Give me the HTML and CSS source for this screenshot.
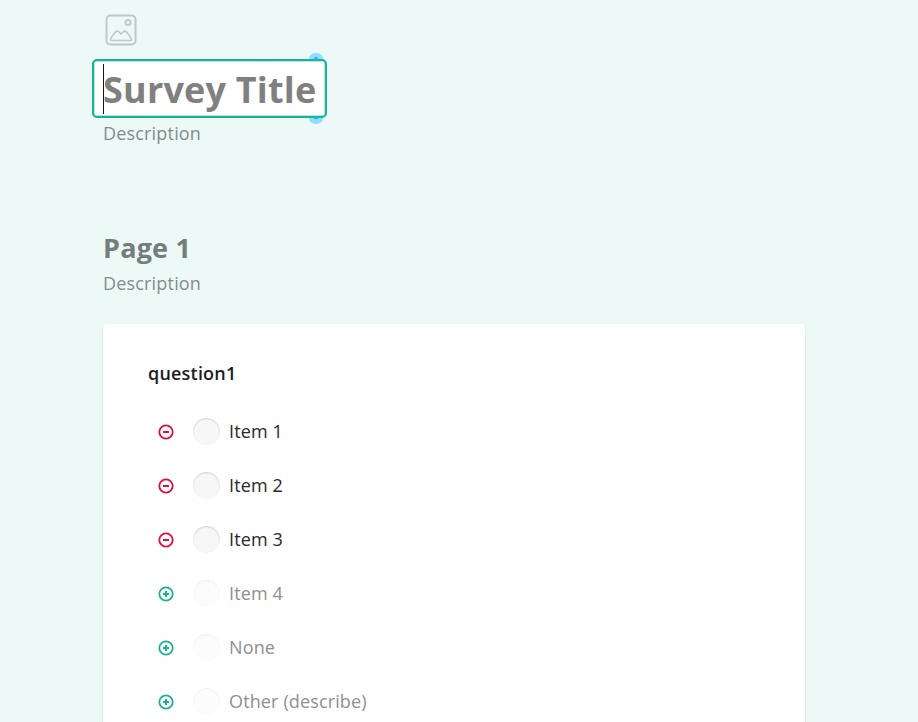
FILE: index.html
```html
<!DOCTYPE html>
<html lang="en">
<head>
<meta charset="utf-8">
<title>Survey</title>
<link rel="stylesheet" href="styles.css">
</head>
<body>
<main class="survey">
  <div class="logo">
    <svg width="32" height="32" viewBox="0 0 32 32" fill="none" stroke="#bfc9c6" stroke-width="2">
      <rect x="1.500" y="1.500" width="29" height="29" rx="4"/>
      <circle cx="23" cy="8.500" r="2.600"/>
      <path d="M5.500 25.500c0-1 .5-2 1.500-3l3.500-4.500c1-1 2.500-1 3.500 0l2 2 2-2c1-1 2.500-1 3.500 0l3.500 4.500c1 1 1.500 2 1.500 3 0 .5-.5 1-1 1H6.500c-.5 0-1-.5-1-1z" stroke-width="1.600"/>
    </svg>
  </div>
  <header class="head">
    <div class="title-box">
      <span class="caret"></span>
      <h1 class="title">Survey Title</h1>
      <span class="handle handle-top"></span>
      <span class="handle handle-bottom"></span>
    </div>
    <p class="desc">Description</p>
  </header>
  <section class="page">
    <h2 class="page-title">Page 1</h2>
    <p class="desc">Description</p>
    <div class="card">
      <h3 class="question">question1</h3>
      <ul class="items">
        <li class="item">
          <svg class="act" width="16" height="16" viewBox="0 0 16 16" fill="none" stroke="#e50a3e" stroke-width="1.800"><circle cx="8" cy="8" r="6.700"/><path d="M5 8h6" stroke-width="2"/></svg>
          <span class="radio"></span><span class="label">Item 1</span>
        </li>
        <li class="item">
          <svg class="act" width="16" height="16" viewBox="0 0 16 16" fill="none" stroke="#e50a3e" stroke-width="1.800"><circle cx="8" cy="8" r="6.700"/><path d="M5 8h6" stroke-width="2"/></svg>
          <span class="radio"></span><span class="label">Item 2</span>
        </li>
        <li class="item">
          <svg class="act" width="16" height="16" viewBox="0 0 16 16" fill="none" stroke="#e50a3e" stroke-width="1.800"><circle cx="8" cy="8" r="6.700"/><path d="M5 8h6" stroke-width="2"/></svg>
          <span class="radio"></span><span class="label">Item 3</span>
        </li>
        <li class="item off">
          <svg class="act" width="16" height="16" viewBox="0 0 16 16" fill="none" stroke="#19b394" stroke-width="1.800"><circle cx="8" cy="8" r="6.700"/><path d="M5 8h6M8 5v6" stroke-width="2"/></svg>
          <span class="radio"></span><span class="label">Item 4</span>
        </li>
        <li class="item off">
          <svg class="act" width="16" height="16" viewBox="0 0 16 16" fill="none" stroke="#19b394" stroke-width="1.800"><circle cx="8" cy="8" r="6.700"/><path d="M5 8h6M8 5v6" stroke-width="2"/></svg>
          <span class="radio"></span><span class="label">None</span>
        </li>
        <li class="item off">
          <svg class="act" width="16" height="16" viewBox="0 0 16 16" fill="none" stroke="#19b394" stroke-width="1.800"><circle cx="8" cy="8" r="6.700"/><path d="M5 8h6M8 5v6" stroke-width="2"/></svg>
          <span class="radio"></span><span class="label">Other (describe)</span>
        </li>
      </ul>
    </div>
  </section>
</main>
</body>
</html>
```

FILE: styles.css
```css
* { box-sizing: border-box; }
html, body { height: 100%; }
body {
  margin: 0;
  height: 722px;
  overflow: hidden;
  background: #edf9f7;
  font-family: "Open Sans", sans-serif;
  color: #161616;
}
.survey {
  width: 702px;
  margin-left: 103px;
  padding-top: 14px;
}
.logo { height: 32px; margin-left: 2px; }
.logo svg { display: block; }
.head { margin-top: 13px; }
.title-box {
  position: relative;
  width: 235px;
  height: 59px;
  margin-left: -11px;
  padding: 3px 0 0 9px;
  background: #fff;
  border: 2px solid #19b394;
  border-radius: 5px;
  box-shadow: inset 0 0 0 0.5px rgba(25, 179, 148, 0.6);
  display: flex;
  align-items: center;
}
.title {
  margin: 0;
  font-size: 36px;
  font-weight: 700;
  line-height: 44px;
  letter-spacing: 0.2px;
  color: #808080;
  white-space: nowrap;
}
.caret {
  position: absolute;
  left: 9px;
  top: 3px;
  width: 1px;
  height: 50px;
  background: #161616;
}
.handle {
  position: absolute;
  right: 2px;
  width: 14px;
  height: 10px;
}
.handle::before {
  content: "";
  position: absolute;
  inset: 0;
  border-radius: 50%;
  background: #8fe0ff;
  z-index: -1;
}
.handle::after {
  content: "";
  position: absolute;
  left: 5px;
  width: 4px;
  height: 3px;
  background: #19b4ff;
}
.handle-top { top: -8px; }
.handle-top::after { top: 4px; border-radius: 50% 50% 0 0; }
.handle-bottom { bottom: -8px; }
.handle-bottom::after { bottom: 5px; border-radius: 50% 50% 0 0; }
.desc {
  margin: 3px 0 0;
  font-size: 18px;
  line-height: 24px;
  letter-spacing: 0.18px;
  color: #838c8a;
}
.page { margin-top: 86px; }
.page-title {
  margin: 0;
  font-size: 27px;
  font-weight: 700;
  line-height: 34px;
  letter-spacing: 0.2px;
  color: #757d7b;
}
.page .desc { margin-top: 6px; }
.card {
  margin-top: 29px;
  height: 600px;
  padding: 37px 45px 0;
  background: #fff;
  border-radius: 4px;
  box-shadow: 0 2px 3px rgba(0, 0, 0, 0.12);
}
.question {
  margin: 0;
  font-size: 18px;
  font-weight: 600;
  line-height: 24px;
  letter-spacing: 0.2px;
  color: #1c1c1c;
}
.items {
  list-style: none;
  margin: 19px 0 0;
  padding: 0;
}
.item {
  display: flex;
  align-items: center;
  height: 54px;
}
.act { margin: 2px 0 0 10px; flex: none; }
.radio {
  width: 27px;
  height: 27px;
  margin-left: 19px;
  border-radius: 50%;
  background: #f7f7f7;
  box-shadow: inset 0 1px 2px rgba(0, 0, 0, 0.15);
  flex: none;
}
.label {
  margin-left: 9px;
  font-size: 18px;
  line-height: 24px;
  letter-spacing: 0.13px;
  color: #2a2a2a;
}
.off .radio { background: #fcfcfc; box-shadow: inset 0 1px 2px rgba(0, 0, 0, 0.05); }
.off .label { color: #8f8f8f; }
```
